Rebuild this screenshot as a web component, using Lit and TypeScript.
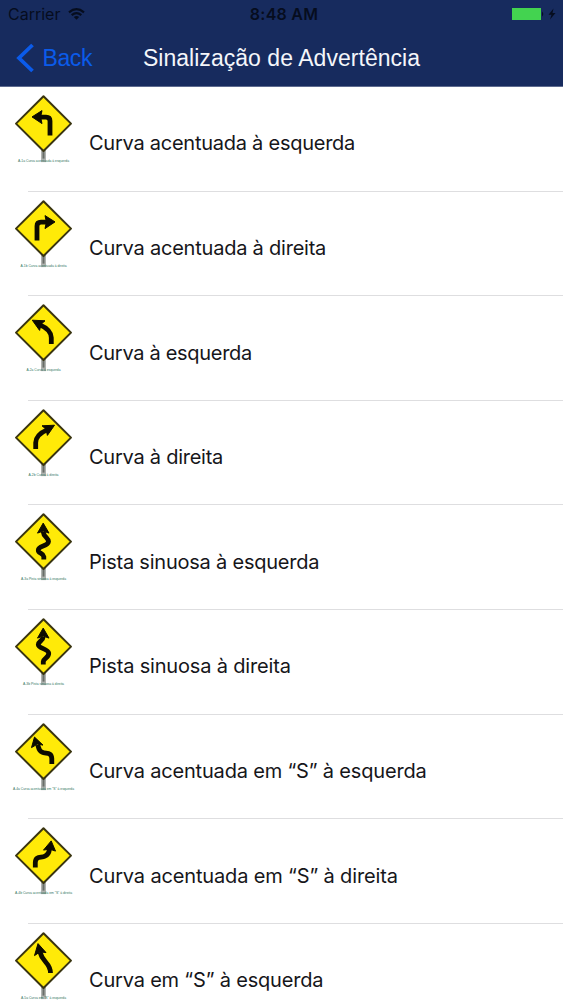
import { LitElement, html, css, svg } from "lit";
import { customElement, property } from "lit/decorators.js";

interface Sign {
  label: string;
  caption: string;
  captionWidth: number;
  spacing: number;
  stem: string;
  head: string;
}

const SIGNS: Sign[] = [
  { label: "Curva acentuada à esquerda", caption: "A-1a Curva acentuada à esquerda", captionWidth: 51, spacing: -0.25,
    stem: "M50 49V34.5Q50 30.5 46 30.5H40", head: "M32 30.3L42 24L40.6 30.5L42 37Z" },
  { label: "Curva acentuada à direita", caption: "A-1b Curva acentuada à direita", captionWidth: 46, spacing: -0.22,
    stem: "M37 49V34.5Q37 30.5 41 30.5H47", head: "M55 30.3L45 24L46.4 30.5L45 37Z" },
  { label: "Curva à esquerda", caption: "A-2a Curva à esquerda", captionWidth: 34, spacing: -0.3,
    stem: "M51.3 48.5V42Q51 34 39.5 29", head: "M32.3 24.6L45 25.2L41 28.6L39.6 34.8Z" },
  { label: "Curva à direita", caption: "A-2b Curva à direita", captionWidth: 30, spacing: -0.25,
    stem: "M35.7 48.5V42Q36 34 47.5 29", head: "M54.5 24.6L42 25.2L46 28.6L47.4 34.8Z" },
  { label: "Pista sinuosa à esquerda", caption: "A-3a Pista sinuosa à esquerda", captionWidth: 45, spacing: -0.22,
    stem: "M43.8 55V52C43 48 38 49 38.3 45.5C38.5 41 48 42 48.5 37C48.5 33 43.5 32.5 43.2 27", head: "M43.2 18.5L49 28.5L43.2 26.5L37.5 28.5Z" },
  { label: "Pista sinuosa à direita", caption: "A-3b Pista sinuosa à direita", captionWidth: 41, spacing: -0.17,
    stem: "M43.3 55V52C44 48 49 48 48.7 43.5C48 39 38.5 39 38.3 35C38.5 31.5 43 31.5 43.2 27", head: "M43.2 18.5L49 28.5L43.2 26.5L37.5 28.5Z" },
  { label: "Curva acentuada em “S” à esquerda", caption: "A-4a Curva acentuada em “S” à esquerda", captionWidth: 61, spacing: -0.18,
    stem: "M51.8 49.5V44C51.5 37 46 39.5 42 37.5C38.5 36 38.8 33 37.7 30", head: "M34.5 22.5L43 30.5L37.5 29.5L31.5 33Z" },
  { label: "Curva acentuada em “S” à direita", caption: "A-4b Curva acentuada em “S” à direita", captionWidth: 57, spacing: -0.15,
    stem: "M35.3 49V44C35.5 37 41 39.5 45 37.5C49.5 35.5 49 33 49.5 30", head: "M51.2 22.3L55.5 32.5L49.5 30.5L43.5 31.5Z" },
  { label: "Curva em “S” à esquerda", caption: "A-5a Curva em “S” à esquerda", captionWidth: 45, spacing: -0.19,
    stem: "M50.5 49.5C50.5 39 42.5 39 40 28.5", head: "M38 20L46 29L40 28.3L34.5 32Z" },
];

@customElement("sign-row")
class SignRow extends LitElement {
  @property({ attribute: false }) sign!: Sign;

  static styles = css`
    :host { display: block; height: 104.6px; flex: none; }
    .row { display: flex; height: 100%; box-sizing: border-box; padding-left: 28px; }
    .cell { flex: 1; display: flex; border-bottom: 1px solid #dedee0; }
    .picture { flex: none; width: 61px; height: 92px; }
    .picture svg { display: block; margin-left: -28px; overflow: visible; }
    .label {
      font: 400 20px/28px Inter, "Liberation Sans", sans-serif;
      color: #16161a; margin-top: 42.4px; white-space: nowrap;
    }
  `;

  render() {
    const s = this.sign;
    return html`<div class="row"><div class="cell">
      <div class="picture">
        <svg width="88" height="92" viewBox="0 0.4 88 92">
          <rect x="41" y="63" width="5" height="12.5" fill="#b0b3b0"></rect>
          <path d="M43.5 64V72" stroke="#696d68" stroke-width="2"></path>
          <path d="M43.5 9.6L71 37L43.5 64.4L16 37Z" fill="#ffea08" stroke="#3a3510" stroke-width="2" stroke-linejoin="round"></path>
          ${svg`<path d=${s.stem} fill="none" stroke="#0d0b00" stroke-width="4.8"></path>
          <path d=${s.head} fill="#0d0b00" stroke="#0d0b00" stroke-width="1" stroke-linejoin="round"></path>
          <text x="43.5" y="75.4" text-anchor="middle" textLength=${s.captionWidth} lengthAdjust="spacingAndGlyphs"
            font-family="Liberation Sans, sans-serif" font-size="4" fill="#2f7561">${s.caption}</text>`}
        </svg>
      </div>
      <div class="label" style="letter-spacing:${s.spacing}px">${s.label}</div>
    </div></div>`;
  }
}

@customElement("app-root")
class AppRoot extends LitElement {
  static styles = css`
    :host { display: block; height: 1000px; overflow: hidden; background: #fff; font-family: Inter, "Liberation Sans", sans-serif; }
    .header { height: 87px; box-sizing: border-box; background: #172b5e; border-bottom: 1px solid #5e6b8f; }
    .status { display: grid; grid-template-columns: 1fr auto 1fr; align-items: center; height: 28px; padding: 0 6px 0 8px; color: #060d1e; font-size: 16px; }
    .carrier { display: flex; align-items: center; gap: 8px; }
    .time { font-weight: 600; font-size: 16px; letter-spacing: .25px; padding-left: 3px; }
    .power { display: flex; justify-content: flex-end; align-items: center; }
    .nav { display: grid; grid-template-columns: 1fr auto 1fr; align-items: center; height: 58px; padding: 1px 16px 0; box-sizing: border-box; }
    .back { display: flex; align-items: center; gap: 7.5px; color: #0b5bea; font: 400 23px/30px "Liberation Sans", sans-serif; letter-spacing: -.4px; }
    .title { color: #f4f6fa; font: 400 23px/30px "Liberation Sans", sans-serif; letter-spacing: .04px; white-space: nowrap; }
    .list { display: flex; flex-direction: column; }
    svg { display: block; }
  `;

  render() {
    return html`
      <div class="header">
        <div class="status">
          <div class="carrier"><span>Carrier</span>
            <svg width="17" height="12" viewBox="0 0 17 12" fill="none" stroke="#060d1e" stroke-width="2.2">
              <path d="M1 4.3Q8.5-2 16 4.3M3.7 7.1Q8.5 3 13.3 7.1"></path>
              <path d="M5.8 9L8.5 11.7L11.2 9Q8.5 6.8 5.8 9Z" fill="#060d1e" stroke="none"></path>
            </svg>
          </div>
          <div class="time">8:48 AM</div>
          <div class="power">
            <svg width="46" height="14" viewBox="0 0 46 14">
              <rect x="1" y="1" width="29" height="12" fill="#43d350"></rect>
              <path d="M31 4.5Q33.5 7 31 9.5Z" fill="#060d1e"></path>
              <path d="M42.5 1.5L37.5 7.8H40.5L39 12.5L44.5 6H41.5Z" fill="#060d1e"></path>
            </svg>
          </div>
        </div>
        <div class="nav">
          <div class="back">
            <svg width="19" height="30" viewBox="0 0 19 30"><path d="M16.5 2L3 15L16.5 28" fill="none" stroke="#0b5bea" stroke-width="3.8"></path></svg>
            <span>Back</span>
          </div>
          <div class="title">Sinalização de Advertência</div>
        </div>
      </div>
      <div class="list">${SIGNS.map((s) => html`<sign-row .sign=${s}></sign-row>`)}</div>`;
  }
}
